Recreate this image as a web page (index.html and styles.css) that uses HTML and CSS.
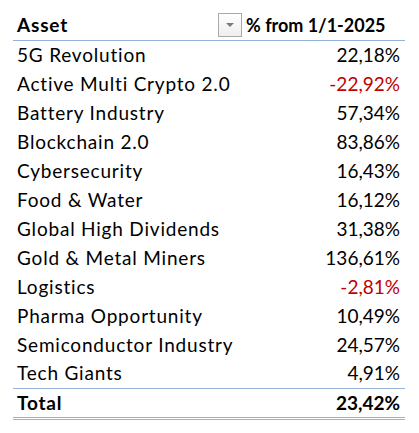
FILE: index.html
```html
<!DOCTYPE html>
<html lang="en">
<head>
  <meta charset="UTF-8" />
  <title>Asset performance</title>
  <link rel="stylesheet" href="styles.css">
</head>
<body>
  <table class="pivot">
    <thead>
      <tr>
        <th class="col-asset">
          <div class="head-cell">
            <span class="head-label">Asset</span>
            <span class="filter-btn"><span class="arrow"></span></span>
          </div>
        </th>
        <th class="col-value">% from 1/1-2025</th>
      </tr>
    </thead>
    <tbody>
      <tr><td>5G Revolution</td><td class="num">22,18%</td></tr>
      <tr><td>Active Multi Crypto 2.0</td><td class="num neg">-22,92%</td></tr>
      <tr><td>Battery Industry</td><td class="num">57,34%</td></tr>
      <tr><td>Blockchain 2.0</td><td class="num">83,86%</td></tr>
      <tr><td>Cybersecurity</td><td class="num">16,43%</td></tr>
      <tr><td>Food &amp; Water</td><td class="num">16,12%</td></tr>
      <tr><td>Global High Dividends</td><td class="num">31,38%</td></tr>
      <tr><td>Gold &amp; Metal Miners</td><td class="num">136,61%</td></tr>
      <tr><td>Logistics</td><td class="num neg">-2,81%</td></tr>
      <tr><td>Pharma Opportunity</td><td class="num">10,49%</td></tr>
      <tr><td>Semiconductor Industry</td><td class="num">24,57%</td></tr>
      <tr class="last"><td>Tech Giants</td><td class="num">4,91%</td></tr>
    </tbody>
    <tfoot>
      <tr><td>Total</td><td class="num">23,42%</td></tr>
    </tfoot>
  </table>
</body>
</html>
```

FILE: styles.css
```css
body {
  margin: 0;
  padding: 11px 14px 0 13px;
  background: #ffffff;
  color: #000000;
  font-family: Lato, 'Liberation Sans', sans-serif;
  font-size: 19px;
}

.pivot {
  border-collapse: collapse;
  width: 392px;
}

.pivot th,
.pivot td {
  height: 29px;
  padding: 0 5px 0 4px;
  line-height: 28px;
  white-space: nowrap;
  box-sizing: border-box;
}

.pivot td:first-child,
.head-label {
  letter-spacing: 0.8px;
}

.pivot th {
  font-weight: bold;
  font-size: 18px;
  text-align: left;
  border-bottom: 1px solid #95b3d7;
}

.head-label {
  font-size: 19px;
}

.col-asset {
  width: 230px;
  padding-right: 1px !important;
}

.col-value {
  padding-left: 3px !important;
}

.head-cell {
  display: flex;
  align-items: center;
  justify-content: space-between;
}

.filter-btn {
  display: flex;
  align-items: center;
  justify-content: center;
  width: 22px;
  height: 22px;
  border: 1px solid #a9a9a9;
  background: linear-gradient(#ffffff, #eeeeee);
}

.arrow {
  width: 0;
  height: 0;
  border-left: 4px solid transparent;
  border-right: 4px solid transparent;
  border-top: 4px solid #7a7a7a;
}

.num {
  text-align: right;
}

.neg {
  color: #c00000;
}

.last td {
  border-bottom: 1px solid #95b3d7;
}

tfoot td {
  font-weight: bold;
  border-bottom: 3px double #95b3d7;
}
```
